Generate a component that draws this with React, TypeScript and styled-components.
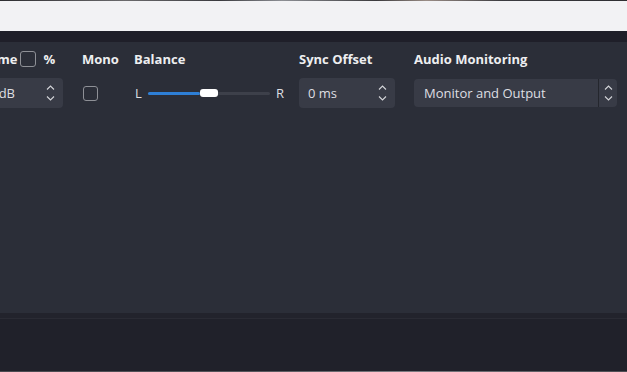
import React from 'react';
import styled, { createGlobalStyle } from 'styled-components';

const GlobalStyle = createGlobalStyle`
  html, body {
    margin: 0;
    padding: 0;
    background: #20212a;
    overflow: hidden;
  }
  body {
    font-family: 'Open Sans', 'Noto Sans', sans-serif;
  }
`;

const Page = styled.div`
  width: 627px;
  height: 372px;
  display: flex;
  flex-direction: column;
  overflow: hidden;
`;

const PhotoStrip = styled.div`
  height: 1px;
  background: linear-gradient(90deg, #2d2d30 0%, #6b6a6c 20%, #3a3a3e 35%, #8d8f94 45%, #3b3a3c 60%, #9a8d86 68%, #3c3c40 80%, #2e2e31 100%);
`;

const LightBar = styled.div`
  height: 30px;
  background: #f2f2f4;
`;

const TitleBar = styled.div`
  height: 11px;
  background: #1f1f29;
`;

const Panel = styled.section`
  height: 271px;
  background: #2b2e38;
  padding-top: 8px;
  box-sizing: border-box;
`;

const Row = styled.div`
  display: flex;
  align-items: flex-start;
`;

const Column = styled.div<{ $w: number; $ml: number }>`
  width: ${(p) => p.$w}px;
  margin-left: ${(p) => p.$ml}px;
  flex-shrink: 0;
  display: flex;
  flex-direction: column;
  gap: 10px;
`;

const Header = styled.div<{ $indent?: number }>`
  height: 18px;
  display: flex;
  align-items: center;
  gap: 3px;
  padding-left: ${(p) => p.$indent ?? 0}px;
  color: #eeeef0;
  font-size: 13px;
  font-weight: 700;
  white-space: nowrap;
`;

const Percent = styled.span`
  margin-left: 4px;
`;

const CheckBox = styled.span<{ $size: number }>`
  width: ${(p) => p.$size}px;
  height: ${(p) => p.$size}px;
  box-sizing: border-box;
  border: 1px solid #8e9096;
  border-radius: 3px;
  background: #2b2e38;
  flex-shrink: 0;
`;

const ControlSlot = styled.div`
  height: 30px;
  display: flex;
  align-items: center;
  padding-left: 1px;
`;

const SpinBox = styled.div<{ $padLeft?: number }>`
  height: 30px;
  width: 100%;
  box-sizing: border-box;
  display: flex;
  align-items: center;
  justify-content: space-between;
  padding: 0 8px 0 ${(p) => p.$padLeft ?? 9}px;
  background: #383b46;
  border-radius: 4px;
  color: #dedfe2;
  font-size: 13px;
  white-space: nowrap;
`;

const Arrows = styled.div`
  display: flex;
  flex-direction: column;
  gap: 6px;
  color: #d4d5d9;
`;

const Combo = styled.div`
  height: 28px;
  margin-top: 1px;
  width: 100%;
  box-sizing: border-box;
  display: flex;
  align-items: stretch;
  background: #383b46;
  border-radius: 4px;
  color: #dedfe2;
  font-size: 13px;
`;

const ComboText = styled.div`
  flex: 1;
  display: flex;
  align-items: center;
  padding-left: 10px;
  border-right: 1px solid #24262d;
`;

const ComboButton = styled.div`
  width: 18px;
  display: flex;
  align-items: center;
  justify-content: center;
`;

const Balance = styled.div`
  display: flex;
  align-items: center;
  gap: 6px;
  width: 100%;
  color: #dedfe2;
  font-size: 13px;
`;

const Track = styled.div`
  position: relative;
  flex: 1;
  height: 3px;
  border-radius: 2px;
  background: #3d404a;
`;

const Fill = styled.div`
  height: 100%;
  border-radius: 2px;
  background: #2e7fd6;
`;

const Handle = styled.div`
  position: absolute;
  top: -3px;
  width: 18px;
  height: 8px;
  border-radius: 3px;
  background: #ffffff;
`;

const BottomArea = styled.div`
  flex: 1;
  display: flex;
  flex-direction: column;
  background: #20212a;
`;

const BottomEdge = styled.div`
  height: 5px;
  background: #22232c;
  border-bottom: 1px solid #2a2b34;
`;

const BottomFill = styled.div`
  flex: 1;
`;

const BottomStrip = styled.div`
  height: 1px;
  background: linear-gradient(90deg, #4a4a50 0%, #55555b 40%, #7a7a80 65%, #4d4d53 100%);
`;

const Chevron = ({ up }: { up?: boolean }) => (
  <svg width="9" height="5" viewBox="0 0 9 5" fill="none">
    <path
      d={up ? 'M1 4.5 L4.5 1 L8 4.5' : 'M1 0.5 L4.5 4 L8 0.5'}
      stroke="currentColor"
      strokeWidth="1.1"
    />
  </svg>
);

const UpDown = () => (
  <Arrows>
    <Chevron up />
    <Chevron />
  </Arrows>
);

const balance = 0.5;
const fill = balance * 100 - 7;

export default function App() {
  return (
    <Page>
      <GlobalStyle />
      <PhotoStrip />
      <LightBar />
      <TitleBar />
      <Panel>
        <Row>
          <Column $w={101} $ml={-38}>
            <Header $indent={6}>
              <span>Volume</span>
              <CheckBox $size={16} />
              <Percent>%</Percent>
            </Header>
            <SpinBox $padLeft={15}>
              <span>0.0 dB</span>
              <UpDown />
            </SpinBox>
          </Column>
          <Column $w={36} $ml={19}>
            <Header>Mono</Header>
            <ControlSlot>
              <CheckBox $size={15} />
            </ControlSlot>
          </Column>
          <Column $w={150} $ml={16}>
            <Header>Balance</Header>
            <ControlSlot>
              <Balance>
                <span>L</span>
                <Track>
                  <Fill style={{ width: `${fill}%` }} />
                  <Handle style={{ left: `${fill}%` }} />
                </Track>
                <span>R</span>
              </Balance>
            </ControlSlot>
          </Column>
          <Column $w={96} $ml={15}>
            <Header>Sync Offset</Header>
            <SpinBox>
              <span>0 ms</span>
              <UpDown />
            </SpinBox>
          </Column>
          <Column $w={203} $ml={19}>
            <Header>Audio Monitoring</Header>
            <Combo>
              <ComboText>Monitor and Output</ComboText>
              <ComboButton>
                <UpDown />
              </ComboButton>
            </Combo>
          </Column>
        </Row>
      </Panel>
      <BottomArea>
        <BottomEdge />
        <BottomFill />
        <BottomStrip />
      </BottomArea>
    </Page>
  );
}
